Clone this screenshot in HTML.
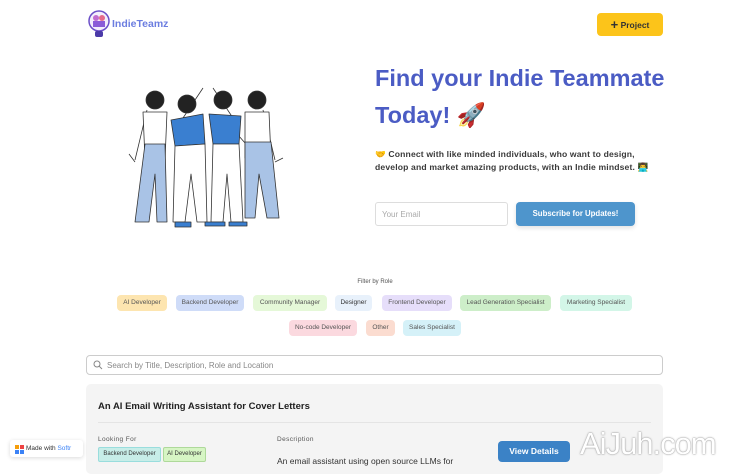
<!DOCTYPE html>
<html><head><meta charset="utf-8"><style>
*{box-sizing:border-box;margin:0;padding:0}
body{width:750px;height:468px;overflow:hidden;background:#fff;font-family:"Liberation Sans","Noto Sans CJK JP",sans-serif;position:relative;color:#222}
.a{position:absolute}
.tag{position:absolute;height:16px;border-radius:4px;font-size:6.5px;line-height:16px;text-align:center;color:#555}
</style></head><body>
<svg class="a" style="left:88px;top:10px" width="22" height="30" viewBox="0 0 22 30">
<circle cx="11" cy="11" r="10" fill="#f3eefc" stroke="#6b4fc8" stroke-width="1.5"/>
<circle cx="8" cy="8" r="3" fill="#c06bd0"/><circle cx="14" cy="8" r="3" fill="#e56a8a"/>
<rect x="5" y="11" width="12" height="6" fill="#8a5cd8"/>
<rect x="7" y="21" width="8" height="6" rx="2" fill="#4b3aa8"/></svg>
<div class="a" style="left:112px;top:18px;font-size:10.5px;font-weight:bold;color:#6b7de0">IndieTeamz</div>
<div class="a" style="left:597px;top:13px;width:66px;height:23px;background:#fcc41a;border-radius:4px;font-size:8.5px;font-weight:bold;line-height:23px;text-align:center;color:#333"><span style="font-size:13px;vertical-align:-1px">+</span> Project</div>

<svg class="a" style="left:125px;top:82px" width="165" height="148" viewBox="0 0 165 148">
<g stroke="#333" stroke-width="0.8" fill="none" stroke-linejoin="round">
<path d="M10 80 L4 72 M150 80 L158 76"/>
<path d="M22 28 L10 78 M138 28 L150 78"/>
<path d="M58 36 L78 6 M108 36 L88 6 M98 36 L128 70"/>
<circle cx="30" cy="18" r="9" fill="#222"/>
<path d="M18 30 L42 30 L40 78 L20 78Z" fill="#fff"/>
<path d="M20 62 L40 62 L42 140 L32 140 L30 92 L24 140 L10 140Z" fill="#a9c3e6"/>
<circle cx="132" cy="18" r="9" fill="#222"/>
<path d="M120 30 L144 30 L146 76 L120 76Z" fill="#fff"/>
<path d="M120 60 L146 60 L154 136 L142 136 L134 92 L130 136 L120 136Z" fill="#a9c3e6"/>
<circle cx="62" cy="22" r="9" fill="#222"/>
<path d="M46 38 L78 32 L80 62 L50 64Z" fill="#3a7fd0"/>
<path d="M50 64 L80 62 L82 140 L72 140 L66 92 L60 140 L48 140Z" fill="#fff"/>
<circle cx="98" cy="18" r="9" fill="#222"/>
<path d="M84 32 L116 34 L114 62 L88 62Z" fill="#3a7fd0"/>
<path d="M88 62 L114 62 L118 140 L106 140 L102 92 L98 140 L86 140Z" fill="#fff"/>
<path d="M80 140 h20 v4 h-20z M104 140 h18 v4 h-18z M50 140 h16 v5 h-16z" fill="#3a7fd0"/>
</g></svg>

<div class="a" style="left:375px;top:60px;font-size:23.5px;font-weight:bold;color:#4b5cc4;line-height:37px">Find your Indie Teammate<br>Today! 🚀</div>
<div class="a" style="left:375px;top:148px;font-size:8.6px;font-weight:bold;color:#3a3a3a;line-height:13px;letter-spacing:0.15px">🤝 Connect with like minded individuals, who want to design,<br>develop and market amazing products, with an Indie mindset. 👨‍💻</div>
<div class="a" style="left:375px;top:202px;width:133px;height:24px;border:1px solid #ddd;border-radius:3px;font-size:8px;color:#aaa;padding:7px 6px">Your Email</div>
<div class="a" style="left:516px;top:202px;width:119px;height:24px;background:#4e95cc;border-radius:4px;font-size:7.8px;font-weight:bold;color:#fff;line-height:24px;text-align:center;box-shadow:0 2px 5px rgba(0,0,0,.12)">Subscribe for Updates!</div>

<div class="a" style="left:0;width:750px;top:279px;font-size:6px;text-align:center;color:#555">Filter by Role</div>
<div class="tag" style="left:117px;top:295px;width:50px;background:#fde5b0">AI Developer</div>
<div class="tag" style="left:176px;top:295px;width:68px;background:#cfdcf8">Backend Developer</div>
<div class="tag" style="left:253px;top:295px;width:74px;background:#e5f8d8">Community Manager</div>
<div class="tag" style="left:335px;top:295px;width:37px;background:#e8f1fb;color:#333">Designer</div>
<div class="tag" style="left:382px;top:295px;width:70px;background:#e6defa">Frontend Developer</div>
<div class="tag" style="left:460px;top:295px;width:91px;background:#cdeec9">Lead Generation Specialist</div>
<div class="tag" style="left:560px;top:295px;width:72px;background:#d3f6e8">Marketing Specialist</div>
<div class="tag" style="left:289px;top:320px;width:68px;background:#fbd9df">No-code Developer</div>
<div class="tag" style="left:366px;top:320px;width:29px;background:#fbdcd0">Other</div>
<div class="tag" style="left:403px;top:320px;width:58px;background:#d5f1f8">Sales Specialist</div>

<div class="a" style="left:86px;top:355px;width:577px;height:20px;border:1px solid #ccc;border-radius:4px;font-size:8px;color:#888;padding:5px 0 0 20px">Search by Title, Description, Role and Location</div>
<svg class="a" style="left:93px;top:360px" width="10" height="10"><circle cx="4" cy="4" r="3" stroke="#888" fill="none"/><path d="M6 6 L9 9" stroke="#888"/></svg>

<div class="a" style="left:86px;top:384px;width:577px;height:90px;background:#f4f4f4;border-radius:5px"></div>
<div class="a" style="left:98px;top:401px;font-size:9.5px;font-weight:bold;color:#222">An AI Email Writing Assistant for Cover Letters</div>
<div class="a" style="left:98px;top:422px;width:553px;height:1px;background:#e4e4e4"></div>
<div class="a" style="left:98px;top:436px;font-size:6.5px;color:#555;letter-spacing:.4px">Looking For</div>
<div class="a" style="left:98px;top:447px;width:63px;height:15px;background:#c7ede8;border:1px solid #9dd;font-size:6px;line-height:13px;text-align:center;color:#333;border-radius:2px">Backend Developer</div>
<div class="a" style="left:163px;top:447px;width:43px;height:15px;background:#d6f5c4;border:1px solid #aed99a;font-size:6px;line-height:13px;text-align:center;color:#333;border-radius:2px">AI Developer</div>
<div class="a" style="left:277px;top:436px;font-size:6.5px;color:#555;letter-spacing:.4px">Description</div>
<div class="a" style="left:277px;top:456px;font-size:8.5px;color:#333">An email assistant using open source LLMs for</div>
<div class="a" style="left:498px;top:441px;width:72px;height:21px;background:#3b82c6;border-radius:4px;font-size:8.5px;font-weight:bold;color:#fff;line-height:21px;text-align:center">View Details</div>

<div class="a" style="left:10px;top:440px;width:73px;height:17px;background:#fff;border-radius:3px;box-shadow:0 1px 4px rgba(0,0,0,.15);font-size:6.5px;line-height:17px;padding-left:16px;color:#333">Made with <span style="color:#3b82f6">Softr</span></div>
<div class="a" style="left:15px;top:445px;width:4px;height:4px;background:#f59e0b"></div>
<div class="a" style="left:20px;top:445px;width:4px;height:4px;background:#ef4444"></div>
<div class="a" style="left:15px;top:450px;width:4px;height:4px;background:#3b82f6"></div>
<div class="a" style="left:20px;top:450px;width:4px;height:4px;background:#3b82f6"></div>
<div class="a" style="left:580px;top:426px;font-size:31px;color:#fff;text-shadow:0 0 1px #888,0 0 2px #aaa;letter-spacing:-1px">AiJuh.com</div>
</body></html>
